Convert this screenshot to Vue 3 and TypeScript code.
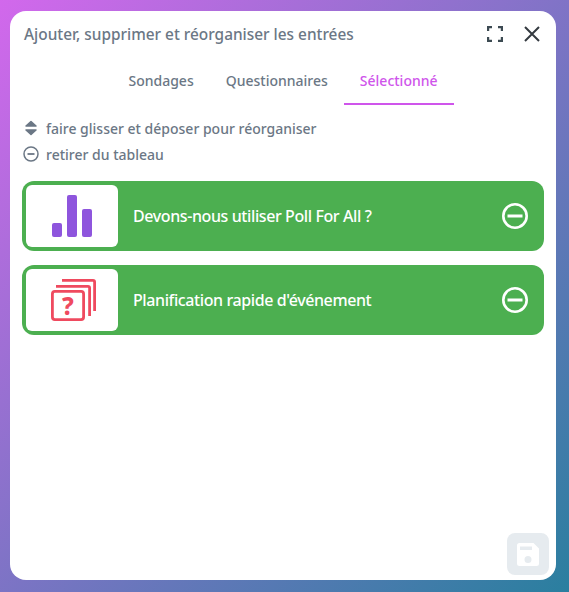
<script setup lang="ts">
const tabs: string[] = ['Sondages', 'Questionnaires', 'Sélectionné']
</script>

<template>
  <div class="page">
    <div class="modal">
      <header class="head">
        <h1 class="title">Ajouter, supprimer et réorganiser les entrées</h1>
        <svg class="ico expand" width="16" height="16" viewBox="0 0 16 16" fill="none" stroke="#3c4a52" stroke-width="2.2">
          <path d="M1.100 5V1.100H5M11 1.100H14.900V5M14.900 11V14.900H11M5 14.900H1.100V11" />
        </svg>
        <svg class="ico close" width="16" height="16" viewBox="0 0 16 16" fill="none" stroke="#343a40" stroke-width="2">
          <path d="M1 1L15 15M15 1L1 15" />
        </svg>
      </header>

      <nav class="tabs">
        <span v-for="(t, i) in tabs" :key="t" class="tab" :class="{ active: i === 2 }">{{ t }}</span>
      </nav>

      <div class="hints">
        <div class="hint">
          <svg width="16" height="16" viewBox="0 0 16 16" fill="#6b7785" stroke="#6b7785" stroke-width="1.500" stroke-linejoin="round">
            <path d="M8 1.500L13 6H3ZM3 10H13L8 14.500Z" />
          </svg>
          <span>faire glisser et déposer pour réorganiser</span>
        </div>
        <div class="hint">
          <svg width="16" height="16" viewBox="0 0 16 16" fill="none" stroke="#6b7785" stroke-width="1.500">
            <circle cx="8" cy="8" r="7" />
            <path d="M4.500 8H11.500" stroke-width="1.800" />
          </svg>
          <span>retirer du tableau</span>
        </div>
      </div>

      <div class="row">
        <div class="thumb">
          <svg width="40" height="44" viewBox="0 0 40 44" fill="#8e55dd">
            <rect x="0" y="29" width="10" height="14" rx="2" />
            <rect x="15" y="1" width="10" height="42" rx="2" />
            <rect x="30" y="15" width="10" height="28" rx="2" />
          </svg>
        </div>
        <span class="label">Devons-nous utiliser Poll For All ?</span>
        <svg class="minus" width="26" height="26" viewBox="0 0 26 26" fill="none" stroke="#fff">
          <circle cx="13" cy="13" r="11.700" stroke-width="2.600" />
          <path d="M5.500 13H20.500" stroke-width="3" />
        </svg>
      </div>

      <div class="row">
        <div class="thumb">
          <svg width="48" height="44" viewBox="0 0 48 44" fill="none" stroke="#ef4a5f" stroke-width="2.800">
            <path d="M14 2.400H45Q46.600 2.400 46.600 4V33" />
            <path d="M8 8.400H40Q41.600 8.400 41.600 10V38" />
            <rect x="4.400" y="13.400" width="31.200" height="28.200" rx="2.500" />
            <text x="20" y="37" text-anchor="middle" class="q">?</text>
          </svg>
        </div>
        <span class="label">Planification rapide d'événement</span>
        <svg class="minus" width="26" height="26" viewBox="0 0 26 26" fill="none" stroke="#fff">
          <circle cx="13" cy="13" r="11.700" stroke-width="2.600" />
          <path d="M5.500 13H20.500" stroke-width="3" />
        </svg>
      </div>

      <button class="save" type="button" aria-label="Enregistrer">
        <svg width="22" height="23" viewBox="0 0 22 23" fill="#fff">
          <path fill-rule="evenodd" d="M2.500 0H16.500L22 5.500V20.500A2.500 2.500 0 0 1 19.500 23H2.500A2.500 2.500 0 0 1 0 20.500V2.500A2.500 2.500 0 0 1 2.500 0ZM3 3.500V7H15V3.500ZM11 13A3.500 3.500 0 1 0 11 20A3.500 3.500 0 1 0 11 13Z" />
        </svg>
      </button>
    </div>
  </div>
</template>

<style>
html, body { margin: 0; padding: 0; }
</style>

<style scoped>
.page {
  box-sizing: border-box;
  width: 569px;
  height: 592px;
  padding: 11px 13px 12px 10px;
  background: linear-gradient(135deg, #d268ec 0%, #2a7f9f 100%);
  font-family: "Noto Sans", sans-serif;
}
.modal {
  position: relative;
  box-sizing: border-box;
  height: 100%;
  padding: 0 12px;
  background: #fff;
  border-radius: 16px;
}
.head {
  display: flex;
  align-items: center;
  height: 46px;
  padding: 0 4px 0 2px;
}
.title {
  flex: 1;
  margin: 0;
  font-size: 15.4px;
  font-weight: 500;
  color: #6b7785;
}
.expand { margin-right: 21px; }
.tabs {
  display: flex;
  justify-content: center;
  height: 48px;
}
.tab {
  box-sizing: border-box;
  height: 48px;
  padding: 13px 16px 0;
  font-size: 14px;
  font-weight: 500;
  line-height: 22px;
  color: #6b7785;
}
.tab.active {
  color: #cf55eb;
  border-bottom: 2px solid #cf55eb;
}
.hints {
  display: flex;
  flex-direction: column;
  gap: 4px;
  margin-top: 12px;
  padding-left: 1px;
}
.hint {
  display: flex;
  align-items: center;
  gap: 7px;
  height: 22px;
  font-size: 14px;
  font-weight: 500;
  color: #6b7785;
}
.row {
  display: flex;
  align-items: center;
  box-sizing: border-box;
  height: 70px;
  margin-top: 14px;
  padding: 4px 16px 4px 4px;
  background: #4caf50;
  border-radius: 12px;
}
.hints + .row { margin-top: 16px; }
.thumb {
  display: flex;
  align-items: center;
  justify-content: center;
  width: 92px;
  height: 62px;
  background: #fff;
  border-radius: 6px;
}
.label {
  flex: 1;
  margin-left: 15px;
  margin-bottom: 1px;
  font-size: 16px;
  font-weight: 500;
  letter-spacing: -0.4px;
  color: #fff;
}
.q {
  font-family: "Noto Sans", sans-serif;
  font-size: 24px;
  font-weight: 800;
  fill: #ef4a5f;
  stroke: none;
}
.save {
  position: absolute;
  right: 7px;
  bottom: 5px;
  display: flex;
  align-items: center;
  justify-content: center;
  width: 42px;
  height: 42px;
  padding: 0;
  border: 0;
  border-radius: 8px;
  background: #e6ebef;
}
</style>
